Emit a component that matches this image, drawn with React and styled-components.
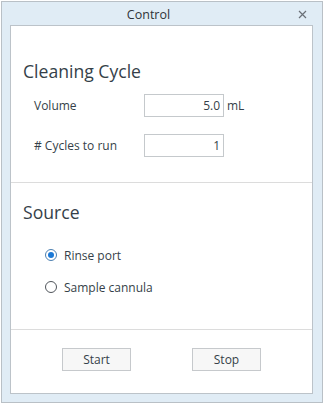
import { useState } from 'react';
import styled, { createGlobalStyle } from 'styled-components';

const GlobalStyle = createGlobalStyle`
  html, body {
    margin: 0;
    padding: 0;
    background: #ffffff;
  }
  body {
    font-family: 'Open Sans', 'Noto Sans', sans-serif;
    color: #353f49;
  }
`;

const App = () => {
  const [volume, setVolume] = useState('5.0');
  const [cycles, setCycles] = useState('1');
  const [source, setSource] = useState('rinse');

  return (
    <>
      <GlobalStyle />
      <Window>
        <TitleBar>
          <Title>Control</Title>
          <CloseButton aria-label="close">
            <svg width="9" height="9" viewBox="0 0 9 9">
              <path d="M1 1 L8 8 M8 1 L1 8" stroke="#6a7077" strokeWidth="1.2" />
            </svg>
          </CloseButton>
        </TitleBar>
        <Panel>
          <Section $top={33} $bottom={25}>
            <Heading>Cleaning Cycle</Heading>
            <FieldList>
              <FieldRow>
                <FieldLabel>Volume</FieldLabel>
                <NumberInput value={volume} onChange={e => setVolume(e.target.value)} />
                <Unit>mL</Unit>
              </FieldRow>
              <FieldRow>
                <FieldLabel># Cycles to run</FieldLabel>
                <NumberInput value={cycles} onChange={e => setCycles(e.target.value)} />
              </FieldRow>
            </FieldList>
          </Section>
          <Section $top={17} $bottom={32}>
            <Heading>Source</Heading>
            <RadioList>
              <RadioRow onClick={() => setSource('rinse')}>
                <RadioDot $checked={source === 'rinse'} />
                Rinse port
              </RadioRow>
              <RadioRow onClick={() => setSource('cannula')}>
                <RadioDot $checked={source === 'cannula'} />
                Sample cannula
              </RadioRow>
            </RadioList>
          </Section>
          <Footer>
            <ActionButton>Start</ActionButton>
            <ActionButton>Stop</ActionButton>
          </Footer>
        </Panel>
      </Window>
    </>
  );
};

const Window = styled.div`
  box-sizing: border-box;
  margin: 1px 0 0 1px;
  width: 322px;
  height: 402px;
  border: 1px solid #b9c0c6;
  background: #e0ecf5;
  display: flex;
  flex-direction: column;
  padding: 0 9px 8px 8px;
`;

const TitleBar = styled.div`
  height: 23px;
  display: flex;
  align-items: center;
`;

const Title = styled.div`
  flex: 1;
  text-align: center;
  font-size: 12.5px;
  color: #2f3338;
  padding-top: 1px;
`;

const CloseButton = styled.div`
  width: 30px;
  display: flex;
  justify-content: center;
  padding-top: 2px;
  margin-right: -4px;
`;

const Panel = styled.div`
  flex: 1;
  border: 1px solid #bcc3c9;
  background: #ffffff;
  display: flex;
  flex-direction: column;
`;

const Section = styled.div`
  padding: ${({ $top }) => $top}px 12px ${({ $bottom }) => $bottom}px 12px;
  border-bottom: 1px solid #dcdcdc;
`;

const Heading = styled.div`
  font-size: 17.6px;
  line-height: 24px;
  color: #353f49;
`;

const FieldList = styled.div`
  display: flex;
  flex-direction: column;
  gap: 17px;
  margin-top: 11px;
  padding-left: 11px;
`;

const FieldRow = styled.div`
  display: flex;
  align-items: center;
  font-size: 12px;
`;

const FieldLabel = styled.span`
  width: 110px;
`;

const NumberInput = styled.input`
  box-sizing: border-box;
  width: 80px;
  height: 23px;
  border: 1px solid #c5c9cc;
  padding: 0 3px 0 4px;
  text-align: right;
  font-family: inherit;
  font-size: 12px;
  color: #353f49;
  outline: none;
`;

const Unit = styled.span`
  margin-left: 3px;
`;

const RadioList = styled.div`
  display: flex;
  flex-direction: column;
  gap: 12px;
  margin-top: 21px;
  padding-left: 22px;
`;

const RadioRow = styled.label`
  display: flex;
  align-items: center;
  height: 20px;
  font-size: 12px;
  cursor: pointer;
`;

const RadioDot = styled.span`
  box-sizing: border-box;
  width: 12px;
  height: 12px;
  border-radius: 50%;
  border: 1px solid ${({ $checked }) => ($checked ? '#4d80b0' : '#50555b')};
  margin-right: 7px;
  display: flex;
  align-items: center;
  justify-content: center;
  &::after {
    content: '';
    width: 6px;
    height: 6px;
    border-radius: 50%;
    background: #1a78d6;
    display: ${({ $checked }) => ($checked ? 'block' : 'none')};
  }
`;

const Footer = styled.div`
  flex: 1;
  display: flex;
  justify-content: center;
  align-items: flex-start;
  gap: 61px;
  padding-top: 18px;
`;

const ActionButton = styled.button`
  box-sizing: border-box;
  width: 69px;
  height: 23px;
  border: 1px solid #c6c9cc;
  background: #f7f7f7;
  font-family: inherit;
  font-size: 12px;
  color: #353f49;
  padding: 0;
`;

export default App;
